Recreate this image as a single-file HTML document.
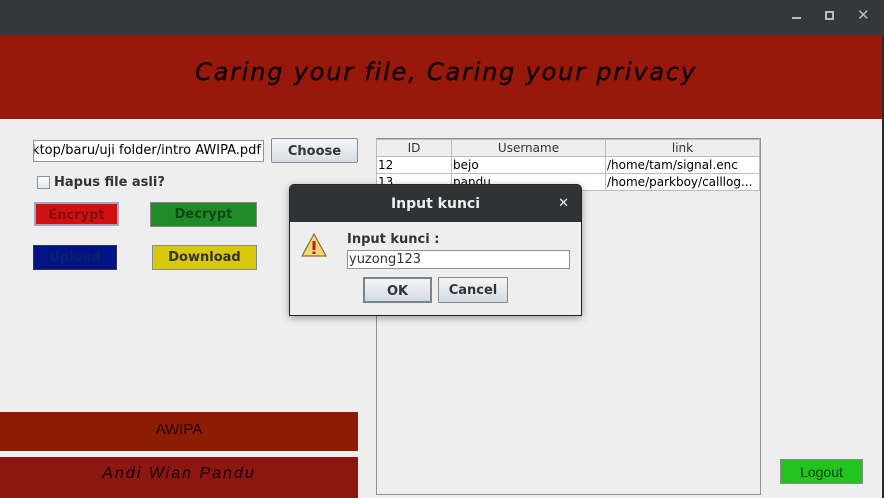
<!DOCTYPE html>
<html><head><meta charset="utf-8"><style>
*{margin:0;padding:0;box-sizing:border-box}
body{width:884px;height:498px;overflow:hidden;background:#eeeeee;font-family:"DejaVu Sans","Liberation Sans",sans-serif;position:relative}
.a{position:absolute}
.btn{position:absolute;font-weight:bold;font-size:13px;text-align:center;border:1px solid #8a8a8a}
td{border:1px solid #b9bec3;font-size:12px;height:17px;padding:0 1px;white-space:nowrap;overflow:hidden}
</style></head><body>
<div class="a" style="left:0;top:0;width:884px;height:35px;background:#33383b"></div>
<div class="a" style="left:792px;top:17px;width:9px;height:2px;background:#b8bcbf"></div>
<div class="a" style="left:825px;top:11px;width:9px;height:9px;border:2px solid #b8bcbf"></div>
<div class="a" style="left:857px;top:6px;color:#b8bcbf;font-size:15px;font-weight:bold">✕</div>
<div class="a" style="left:0;top:35px;width:882px;height:84px;background:#98180b"></div>
<div class="a" style="left:882px;top:35px;width:2px;height:463px;background:#2a2a2a"></div>
<div class="a" style="left:0;top:58px;width:884px;text-align:center;font-size:24px;font-style:italic;letter-spacing:1.8px;color:#100000;padding-left:8px;-webkit-text-stroke:0.4px #100000">Caring your file, Caring your privacy</div>

<div class="a" style="left:33px;top:140px;width:231px;height:22px;background:#fff;border:1px solid #8d9499;font-size:13px;line-height:20px;white-space:nowrap;overflow:hidden;direction:rtl;padding-right:2px"><span style="direction:ltr;unicode-bidi:bidi-override">sktop/baru/uji folder/intro AWIPA.pdf</span></div>
<div class="btn" style="left:271px;top:138px;width:87px;height:25px;line-height:24px;padding-top:1px;background:linear-gradient(#f4f6f8,#d6dde4);color:#333;border-radius:2px">Choose</div>
<div class="a" style="left:37px;top:176px;width:13px;height:13px;border:1px solid #8d9499;background:linear-gradient(#fff,#dfe4e9)"></div>
<div class="a" style="left:54px;top:175px;font-size:13px;font-weight:bold;color:#333">Hapus file asli?</div>
<div class="btn" style="left:34px;top:202px;width:85px;height:24px;line-height:23px;background:#cf1111;color:#801010;border:2px solid #9aa6c4">Encrypt</div>
<div class="btn" style="left:150px;top:202px;width:107px;height:25px;line-height:24px;background:#218b2a;color:#0f4a12">Decrypt</div>
<div class="btn" style="left:33px;top:245px;width:84px;height:25px;line-height:24px;background:#001488;color:#0a1f6a;border-color:#334">Upload</div>
<div class="btn" style="left:152px;top:245px;width:105px;height:25px;line-height:24px;background:#d8c80c;color:#333">Download</div>

<div class="a" style="left:0;top:412px;width:358px;height:39px;background:#8d1c05;text-align:center;line-height:36px;font-size:15px;color:#200;font-family:'Liberation Sans Narrow','Liberation Sans',sans-serif">AWIPA</div>
<div class="a" style="left:0;top:457px;width:358px;height:41px;background:#8c1610;text-align:center;line-height:34px;font-size:16px;font-style:italic;color:#100;letter-spacing:2px;font-family:'Liberation Sans',sans-serif">Andi Wian Pandu</div>

<div class="a" style="left:376px;top:138px;width:385px;height:357px;border:1px solid #8d9499;background:#eeeeee"></div>
<table class="a" style="left:376px;top:139px;width:384px;border-collapse:collapse;background:#fff">
<tr style="background:#eeeeee;text-align:center;color:#333"><td style="width:75px">ID</td><td style="width:154px">Username</td><td>link</td></tr>
<tr><td>12</td><td>bejo</td><td>/home/tam/signal.enc</td></tr>
<tr><td>13</td><td>pandu</td><td>/home/parkboy/calllog...</td></tr>
</table>
<div class="btn" style="left:780px;top:459px;width:83px;height:25px;line-height:24px;background:#22c41d;color:#0d3a0d;font-weight:normal;font-size:14px;font-family:'Liberation Sans Narrow','Liberation Sans',sans-serif">Logout</div>

<div class="a" style="left:289px;top:184px;width:293px;height:132px;border:1px solid #222;border-radius:5px 5px 0 0;background:#eeeeee;box-shadow:0 2px 8px rgba(0,0,0,.35);overflow:hidden">
<div style="height:37px;background:#2f3335;color:#eee;font-weight:bold;font-size:14px;text-align:center;line-height:38px">Input kunci<span style="position:absolute;right:12px;top:0;font-size:13px">✕</span></div>
<svg class="a" style="left:10px;top:47px" width="28" height="26"><path d="M14 2 L26 24 L2 24 Z" fill="#f3d57a" stroke="#8a7030" stroke-width="1.2"/><rect x="12.5" y="9" width="3" height="9" fill="#b0251a"/><rect x="12.5" y="19.5" width="3" height="2.5" fill="#b0251a"/></svg>
<div class="a" style="left:57px;top:47px;font-size:13px;font-weight:bold;color:#333">Input kunci :</div>
<div class="a" style="left:57px;top:65px;width:223px;height:19px;background:#fff;border:1px solid #8d9499;font-size:13px;line-height:17px;padding-left:1px;color:#333">yuzong123</div>
<div class="btn" style="left:73px;top:92px;width:69px;height:26px;line-height:25px;background:linear-gradient(#f4f6f8,#d3dbe3);color:#333;border:2px solid #7a848c">OK</div>
<div class="btn" style="left:148px;top:92px;width:70px;height:26px;line-height:25px;background:linear-gradient(#f4f6f8,#d3dbe3);color:#333">Cancel</div>
</div>
</body></html>
